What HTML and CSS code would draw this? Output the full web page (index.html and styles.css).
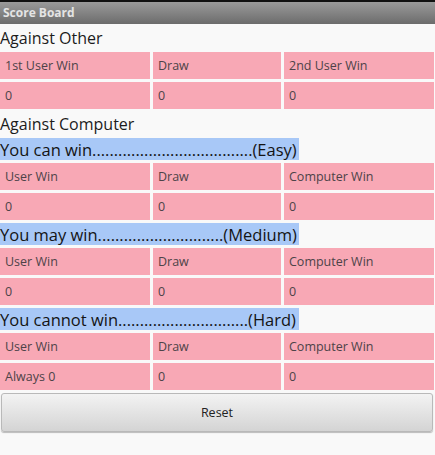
FILE: index.html
```html
<!DOCTYPE html>
<html>
<head>
<meta charset="utf-8">
<link rel="stylesheet" href="styles.css">
</head>
<body>
<div class="titlebar">Score Board</div>

<div class="heading h-other">Against Other</div>
<div class="table">
  <div class="cell">1st User Win</div>
  <div class="cell">Draw</div>
  <div class="cell">2nd User Win</div>
  <div class="cell">0</div>
  <div class="cell">0</div>
  <div class="cell">0</div>
</div>

<div class="heading h-comp">Against Computer</div>

<div class="level">You can win.....................................(Easy)</div>
<div class="table">
  <div class="cell">User Win</div>
  <div class="cell">Draw</div>
  <div class="cell">Computer Win</div>
  <div class="cell">0</div>
  <div class="cell">0</div>
  <div class="cell">0</div>
</div>

<div class="level">You may win.............................(Medium)</div>
<div class="table">
  <div class="cell">User Win</div>
  <div class="cell">Draw</div>
  <div class="cell">Computer Win</div>
  <div class="cell">0</div>
  <div class="cell">0</div>
  <div class="cell">0</div>
</div>

<div class="level">You cannot win..............................(Hard)</div>
<div class="table">
  <div class="cell">User Win</div>
  <div class="cell">Draw</div>
  <div class="cell">Computer Win</div>
  <div class="cell">Always 0</div>
  <div class="cell">0</div>
  <div class="cell">0</div>
</div>

<div class="btn-wrap"><button class="reset">Reset</button></div>
</body>
</html>
```

FILE: styles.css
```css
html, body {
  margin: 0;
  padding: 0;
}
body {
  width: 435px;
  height: 455px;
  overflow: hidden;
  background: #f9f9f9;
  font-family: "Open Sans", "DejaVu Sans", sans-serif;
}
.titlebar {
  height: 22px;
  border-top: 2px solid #111;
  background: linear-gradient(#9a9a9a, #6c6c6c);
  color: #e4e4e4;
  font-weight: bold;
  font-size: 12px;
  line-height: 22px;
  padding-left: 3px;
  box-sizing: content-box;
}
.heading {
  display: flex;
  align-items: center;
  font-size: 16px;
  color: #1c1c1c;
  padding-left: 0;
}
.h-other { height: 28px; }
.h-comp { height: 29px; }
.table {
  display: grid;
  grid-template-columns: 150px 128px 150px;
  grid-auto-rows: 27px;
  gap: 3px;
  margin-bottom: 3px;
}
.h-other + .table { margin-bottom: 0; }
.cell {
  background: #f8a8b5;
  color: #4d4348;
  font-size: 12.5px;
  display: flex;
  align-items: center;
  padding-left: 5px;
  white-space: nowrap;
}
.level {
  display: inline-flex;
  align-items: center;
  width: 299px;
  height: 22px;
  margin-bottom: 3px;
  background: #a8c8f7;
  color: #141414;
  font-size: 16.5px;
  white-space: nowrap;
  overflow: hidden;
  vertical-align: top;
}
.btn-wrap {
  padding: 0 2px 0 1px;
}
.reset {
  display: block;
  width: 100%;
  height: 39px;
  border: 1px solid #b9b9b9;
  border-radius: 3px;
  background: linear-gradient(#f3f3f3, #d4d4d4);
  box-shadow: 0 1px 1px rgba(0,0,0,0.25);
  font-family: "Open Sans", "DejaVu Sans", sans-serif;
  font-size: 12.5px;
  color: #222;
  padding: 0;
}
```
